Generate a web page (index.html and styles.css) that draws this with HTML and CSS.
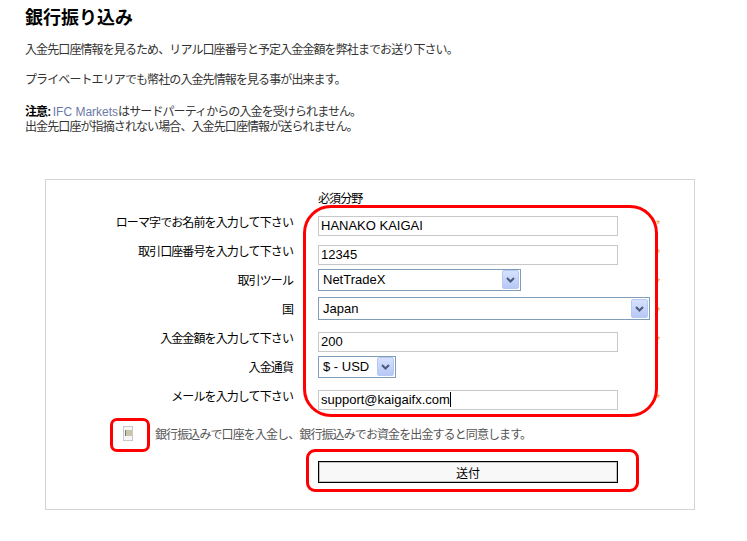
FILE: index.html
```html
<!DOCTYPE html>
<html lang="ja">
<head>
    <meta charset="UTF-8">
    <title>銀行振り込み</title>
    <link rel="stylesheet" href="styles.css">
</head>
<body>
    <h1 class="titulo">銀行振り込み</h1>
    <p class="texto">入金先口座情報を見るため、リアル口座番号と予定入金金額を弊社までお送り下さい。</p>
    <p class="texto">プライベートエリアでも幣社の入金先情報を見る事が出来ます。</p>
    <p class="texto nota"><strong>注意:</strong> <span class="marca">IFC Markets</span>はサードパーティからの入金を受けられません。<br>出金先口座が指摘されない場合、入金先口座情報が送られません。</p>

    <div class="form-box">
        <div class="obrigatorio">必須分野</div>

        <div class="linha">
            <label>ローマ字でお名前を入力して下さい</label>
            <div class="campo"><input class="txt" type="text" value="HANAKO KAIGAI"></div>
            <span class="ast">*</span>
        </div>
        <div class="linha">
            <label>取引口座番号を入力して下さい</label>
            <div class="campo"><input class="txt" type="text" value="12345"></div>
            <span class="ast">*</span>
        </div>
        <div class="linha">
            <label>取引ツール</label>
            <div class="campo">
                <div class="sel sel-tool"><span>NetTradeX</span><span class="seta"><svg width="9" height="6" viewBox="0 0 9 6"><path d="M1 1 L4.5 4.5 L8 1" fill="none" stroke="#4a5a7c" stroke-width="2"/></svg></span></div>
            </div>
            <span class="ast">*</span>
        </div>
        <div class="linha">
            <label>国</label>
            <div class="campo">
                <div class="sel sel-pais"><span>Japan</span><span class="seta"><svg width="9" height="6" viewBox="0 0 9 6"><path d="M1 1 L4.5 4.5 L8 1" fill="none" stroke="#4a5a7c" stroke-width="2"/></svg></span></div>
            </div>
            <span class="ast">*</span>
        </div>
        <div class="linha">
            <label>入金金額を入力して下さい</label>
            <div class="campo"><input class="txt" type="text" value="200"></div>
            <span class="ast">*</span>
        </div>
        <div class="linha">
            <label>入金通貨</label>
            <div class="campo">
                <div class="sel sel-moeda"><span>$ - USD</span><span class="seta"><svg width="9" height="6" viewBox="0 0 9 6"><path d="M1 1 L4.5 4.5 L8 1" fill="none" stroke="#4a5a7c" stroke-width="2"/></svg></span></div>
            </div>
            <span class="ast"></span>
        </div>
        <div class="linha">
            <label>メールを入力して下さい</label>
            <div class="campo"><div class="txt txt-div">support@kaigaifx.com<span class="cursor"></span></div></div>
            <span class="ast">*</span>
        </div>

        <div class="linha-check">
            <span class="check"><span class="check-in"></span></span>
            <span class="check-texto">銀行振込みで口座を入金し、銀行振込みでお資金を出金すると同意します。</span>
        </div>

        <div class="linha-botao">
            <button class="enviar">送付</button>
        </div>

        <!-- marcações vermelhas -->
        <div class="marca-campos"></div>
        <div class="marca-check"></div>
        <div class="marca-botao"></div>
    </div>
</body>
</html>
```

FILE: styles.css
```css
body {
    margin: 0;
    padding: 7px 25px 0;
    font-family: "Liberation Sans", "Noto Sans CJK JP", sans-serif;
    font-size: 12px;
    letter-spacing: -0.9px;
    color: #333;
    background-color: #fff;
}

.titulo {
    margin: 0 0 14px;
    font-size: 18px;
    line-height: 22px;
    font-weight: bold;
    letter-spacing: 0;
    color: #000;
}

.texto {
    margin: 0 0 15px;
    line-height: 15px;
}

.nota {
    margin-top: 17px;
    margin-bottom: 44px;
}

.nota strong {
    color: #000;
}

.marca {
    color: #6b78a8;
    letter-spacing: 0;
}

.form-box {
    position: relative;
    margin-left: 20px;
    width: 648px;
    border: 1px solid #d4d4d4;
    padding: 12px 0 26px;
    color: #000;
}

.obrigatorio {
    padding-left: 272px;
    line-height: 15px;
}

.linha {
    display: grid;
    grid-template-columns: 247px 337px 20px;
    column-gap: 25px;
    align-items: center;
    height: 29px;
}

.linha label {
    text-align: right;
}

.ast {
    color: #f0a030;
    font-size: 11px;
    margin-left: -24px;
    padding-top: 4px;
}

.txt {
    box-sizing: border-box;
    width: 300px;
    height: 20px;
    margin-top: 8px;
    border: 1px solid #c8c8c8;
    padding: 0 2px;
    font-family: "Liberation Sans", sans-serif;
    font-size: 13px;
    letter-spacing: 0;
    color: #000;
    background: #fff;
}

.txt-div {
    line-height: 18px;
}

.cursor {
    display: inline-block;
    width: 1px;
    height: 15px;
    background: #000;
    vertical-align: -3px;
}

.sel {
    box-sizing: border-box;
    display: flex;
    align-items: center;
    justify-content: space-between;
    height: 22px;
    border: 1px solid #7f9db9;
    padding: 0 1px 0 4px;
    font-family: "Liberation Sans", sans-serif;
    font-size: 13px;
    letter-spacing: 0;
    background: #fff;
}

.sel-tool {
    width: 203px;
}

.sel-pais {
    width: 332px;
    height: 23px;
}

.sel-moeda {
    width: 78px;
}

.seta {
    display: flex;
    align-items: center;
    justify-content: center;
    width: 15px;
    height: 17px;
    border: 1px solid #b7c8f2;
    border-radius: 2px;
    background: linear-gradient(#d6e1fd, #b6c8f6);
}

.linha-check {
    display: flex;
    align-items: center;
    margin-top: 15px;
    height: 16px;
    padding-left: 77px;
}

.check {
    box-sizing: border-box;
    width: 10px;
    height: 15px;
    border: 1px solid #c8c8c8;
    background: #f6f6f6;
    display: flex;
    align-items: center;
    justify-content: center;
}

.check-in {
    width: 6px;
    height: 6px;
    border-left: 1px solid #777;
    background: #c9c5a8;
}

.check-texto {
    margin-left: 22px;
    color: #555;
}

.linha-botao {
    margin-top: 20px;
    padding-left: 272px;
}

.enviar {
    box-sizing: border-box;
    width: 300px;
    height: 22px;
    border: 1px solid #000;
    box-shadow: inset 0 0 0 1px #c0c0c0;
    background: #f8f8f8;
    font-family: "Liberation Sans", "Noto Sans CJK JP", sans-serif;
    font-size: 12px;
    letter-spacing: 0;
    color: #000;
    padding: 0;
}

.marca-campos,
.marca-check,
.marca-botao {
    position: absolute;
    box-sizing: border-box;
    border: 3px solid #ff0000;
}

.marca-campos {
    left: 257px;
    top: 25px;
    width: 355px;
    height: 212px;
    border-radius: 28px;
}

.marca-check {
    left: 64px;
    top: 238px;
    width: 40px;
    height: 34px;
    border-radius: 7px;
}

.marca-botao {
    left: 260px;
    top: 269px;
    width: 333px;
    height: 43px;
    border-radius: 9px;
}
```
